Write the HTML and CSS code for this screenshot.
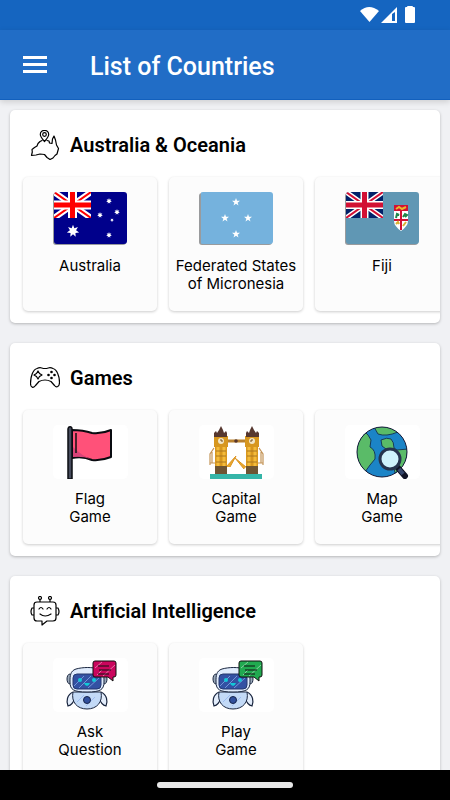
FILE: index.html
```html
<!DOCTYPE html>
<html lang="en">
<head>
<meta charset="utf-8">
<meta name="viewport" content="width=device-width, initial-scale=1">
<title>List of Countries</title>
<link rel="stylesheet" href="styles.css">
</head>
<body>
<svg class="defs" aria-hidden="true">
  <defs>
    <clipPath id="flag-shape"><rect x="1" y="0" width="73" height="52" rx="3"/></clipPath>
    <clipPath id="canton"><rect x="1" y="0" width="37" height="26"/></clipPath>
    <clipPath id="earth"><circle cx="38" cy="27" r="25"/></clipPath>
    <path id="star5" d="M0-4 1-1.200 4-1.200 1.600.7 2.500 3.600 0 1.800-2.500 3.600-1.600.7-4-1.200-1-1.200Z"/>
    <path id="star7" d="M0-7 1.500-3 5.500-4.400 3.400-.8 6.800 1.600 2.700 2.300 3 6.300 0 3.600-3 6.300-2.700 2.300-6.800 1.600-3.400-.8-5.500-4.400-1.500-3Z"/>
    <g id="robot" transform="translate(0 1)">
      <path d="M17 15c-4 0-4 10 0 10M51 15c4 0 4 10 0 10" fill="#9aa9ba" stroke="#1b2740" stroke-width="1"/>
      <path d="M20 33c-6 3-7 9-5 14 4-1 6-5 7-8M48 33c6 3 7 9 5 14-4-1-6-5-7-8" fill="#e3edfb" stroke="#1b2740" stroke-width="1.200"/>
      <path d="M20 33c-2 10 4 17 14 17s16-7 14-17Z" fill="#c4daf7" stroke="#1b2740" stroke-width="1"/>
      <path d="M23 10c7-2 17-2 22 0 6 2 6 7 6 13 0 8-4 10-17 10S17 31 17 23c0-6 0-11 6-13Z" fill="#dfebfc" stroke="#1b2740" stroke-width="1"/>
      <rect x="20" y="15" width="28" height="15" rx="4" fill="#3452a3" stroke="#26396e"/>
      <path d="m21 27 10-10M26 29l12-12M35 29l11-10M24 43l7-7M33 47l9-9" stroke="#8fb1ef" stroke-width="1" opacity=".7"/>
      <circle cx="27" cy="21" r="2" fill="#13c8d7"/><circle cx="41" cy="21" r="2" fill="#13c8d7"/>
      <path d="M31 24h6q-1 3-3 3t-3-3Z" fill="#13c8d7"/>
      <circle cx="34" cy="41" r="3.500" fill="#31509d" stroke="#17254b"/>
      <path d="M42 2h19q2 0 2 2v12q0 2-2 2h-1v4l-5-4H42q-2 0-2-2V4q0-2 2-2Z" stroke="#111" stroke-width="1"/>
      <path d="m42 9 7-6M50 17 62 6M44 16l5-5" stroke="#fff" opacity=".45"/>
      <path d="M45 7h11M46 11h12M45 15h11" stroke="#111" stroke-width="1"/>
    </g>
  </defs>
</svg>

<div class="screen">
  <div class="status-bar">
    <svg width="56" height="18" viewBox="0 0 56 18" fill="#fff" aria-hidden="true">
      <path d="M0 5q9-8 19 0l-9.500 11Z"/>
      <path fill-rule="evenodd" d="M21 17 37 1v16ZM32 8v7h3V6Z"/>
      <path d="M47 1q0-1 1-1h4q1 0 1 1h1q1 0 1 1v14q0 1-1 1h-8q-1 0-1-1V2q0-1 1-1Z"/>
    </svg>
  </div>

  <header class="app-bar">
    <button class="menu" type="button" aria-label="Open menu"><span></span><span></span><span></span></button>
    <h1>List of Countries</h1>
  </header>

  <main class="content">
    <section class="card">
      <h2>
        <svg class="outline" viewBox="0 0 30 30" aria-hidden="true">
          <path d="M14.500 11.500C11 7.500 10.300 5.500 10.300 4.500a4.200 4.200 0 0 1 8.400 0c0 1-.7 3-4.200 7Z"/><circle cx="14.500" cy="4.500" r="1.800"/>
          <path d="M12 10.500 10 11.500 8 13.500 7 16 4.500 17.500 2 19.500 2.300 22 1.500 25.500 6 25 10 24 14.500 24.500 17 27.500 20 29.500 23 28 25 25.500 27 24 28.500 18.500 26.500 15 25.500 10 24 6 22.500 9 22 13.500 19.500 13 19 11 17 10.500"/>
        </svg>
        Australia &amp; Oceania
      </h2>
      <div class="tiles">
        <a class="tile" href="#">
          <svg viewBox="0 0 75 54" aria-hidden="true">
            <rect x="0" y="1" width="73" height="52" rx="3" fill="#999b9d"/>
            <g clip-path="url(#flag-shape)">
              <path d="M1 0h73v52H1Z" fill="#00008b"/>
              <g clip-path="url(#canton)">
                <path d="M1 0 38 26M38 0 1 26" stroke="#fff" stroke-width="6"/>
                <path d="M1 0 38 26M38 0 1 26" stroke="#f00" stroke-width="2"/>
                <path d="M19.500 0v26M1 13h37" stroke="#fff" stroke-width="9"/>
                <path d="M19.500 0v26M1 13h37" stroke="#f00" stroke-width="5"/>
              </g>
              <g fill="#fff">
                <use href="#star7" transform="translate(20 39) scale(.9)"/>
                <use href="#star7" transform="translate(56 9) scale(.42)"/>
                <use href="#star7" transform="translate(47 23) scale(.42)"/>
                <use href="#star7" transform="translate(64 20) scale(.42)"/>
                <use href="#star7" transform="translate(59 28) scale(.26)"/>
                <use href="#star7" transform="translate(56 43) scale(.42)"/>
              </g>
            </g>
          </svg>
          <span>Australia</span>
        </a>
        <a class="tile" href="#">
          <svg viewBox="0 0 75 54" aria-hidden="true">
            <rect x="0" y="1" width="73" height="52" rx="3" fill="#999b9d"/>
            <g clip-path="url(#flag-shape)"><path d="M2 0h72v52H2Z" fill="#75b2dd"/></g>
            <g fill="#fff">
              <use href="#star5" x="37" y="10"/><use href="#star5" x="26" y="26"/>
              <use href="#star5" x="49" y="26"/><use href="#star5" x="37" y="42"/>
            </g>
          </svg>
          <span>Federated States of Micronesia</span>
        </a>
        <a class="tile" href="#">
          <svg viewBox="0 0 75 54" aria-hidden="true">
            <rect x="0" y="1" width="73" height="52" rx="3" fill="#999b9d"/>
            <g clip-path="url(#flag-shape)">
              <path d="M1 0h73v52H1Z" fill="#6097b4"/>
              <g clip-path="url(#canton)">
                <path d="M1 0h37v26H1Z" fill="#012169"/>
                <path d="M1 0 38 26M38 0 1 26" stroke="#fff" stroke-width="5"/>
                <path d="M1 0 38 26M38 0 1 26" stroke="#d21034" stroke-width="2"/>
                <path d="M19.500 0v26M1 13h37" stroke="#fff" stroke-width="8"/>
                <path d="M19.500 0v26M1 13h37" stroke="#d21034" stroke-width="5"/>
              </g>
              <path d="M49 13h14v16q0 5-7 10-7-5-7-10Z" fill="#fff"/>
              <path d="M49 13h14v6H49Z" fill="#d21034"/>
              <path d="m51 17 3-2 3 2 4-2" stroke="#e8b82c" stroke-width="2" fill="none"/>
              <path d="M56 19v19M49 28h14" stroke="#d21034" stroke-width="2"/>
              <path d="m51 26 1-4 2 1-2 0M58 25l2-3 2 1-2 2" fill="none" stroke="#21864b" stroke-width="2"/>
              <path d="m51 32 2-2 1 2M58 34l3-4" fill="none" stroke="#d9b132" stroke-width="2"/>
            </g>
          </svg>
          <span>Fiji</span>
        </a>
      </div>
    </section>

    <section class="card">
      <h2>
        <svg class="outline" viewBox="0 0 30 30" aria-hidden="true">
          <path d="M7 5.500c4-2 4 0 8 0s4-2 8 0c4 1 6.500 8 6.500 14 0 4-3 5.500-5 3l-3.500-4q-6-3-12 0l-3.500 4c-2 3-5 2-5-2 0-7 2.500-14 6.500-15Z"/>
          <path d="m8 8 1.500 2.500L12 12l-2.500 1.500L8 16l-1.500-2.500L4 12l2.500-1.500Z"/>
          <g fill="#000" stroke="none"><circle cx="21.500" cy="9" r="1.300"/><circle cx="18.500" cy="12" r="1.300"/><circle cx="24.500" cy="12" r="1.300"/><circle cx="21.500" cy="15" r="1.300"/></g>
        </svg>
        Games
      </h2>
      <div class="tiles">
        <a class="tile" href="#">
          <svg class="art" viewBox="0 0 75 54" aria-hidden="true">
            <path d="M19 5q11 0 20 3 10 1 19-3v27q-10 4-19 3-9-4-20-2Z" fill="#ff5179" stroke="#090b10" stroke-width="2" stroke-linejoin="round"/>
            <path d="M20 22v10q9-1 18 2-9-3-18-12Z" fill="#d94378"/>
            <path d="M23 8v20" stroke="#111" stroke-width="1.500"/>
            <path d="M16 2q3-1 3 2v50h-4V4q0-1 1-2Z" fill="#474c5d" stroke="#090b10" stroke-width="1.500"/>
          </svg>
          <span>Flag<br>Game</span>
        </a>
        <a class="tile" href="#">
          <svg class="art" viewBox="0 0 75 54" aria-hidden="true">
            <path d="M11 49h52v5H11Z" fill="#35b5a8"/>
            <path d="M29 16h20" stroke="#b9822f" stroke-width="3"/><circle cx="37" cy="16" r="1.800" fill="#59362c"/>
            <path d="m27 42 10-11-6 11M47 42l-11-9 9 11" fill="#e9a72a" stroke="#dc9524"/>
            <g id="tower">
              <path d="M15 23 11 29v11M11 38h5M13 27v11" fill="none" stroke="#c49457" stroke-width="1.200"/>
              <path d="M15 11h14v11h-1v20H16V22h-1Z" fill="#d7971f"/>
              <path d="M15 12V8l2-2 1 2 2-3 2-4 2 4 1 3 2-2 1 2v4Z" fill="#56372f"/>
              <circle cx="22" cy="16" r="3" fill="#f2e6c6"/><path d="M22 14v2h2" stroke="#765020" fill="none"/>
              <path d="M19 22v19M25 22v19" stroke="#f4bb3a" stroke-width="3"/>
              <path d="M17 26h10M17 31h10M17 37h10" stroke="#a87623"/>
              <path d="M16 41h12v8H16Z" fill="#6d5433"/>
            </g>
            <use href="#tower" transform="matrix(-1 0 0 1 75 0)"/>
          </svg>
          <span>Capital<br>Game</span>
        </a>
        <a class="tile" href="#">
          <svg class="art" viewBox="0 0 75 54" aria-hidden="true">
            <g transform="translate(-1 0)">
              <circle cx="38" cy="27" r="25" fill="#1b84c7"/>
              <g clip-path="url(#earth)" fill="#5abb68" stroke="#173c5a" stroke-width="1">
                <path d="m30 2 4 7q8 3 20-2l-8-7Z"/>
                <path d="m22 8 2 2 3 5-1 7q6 3 5 12l-5 6-5 7L8 38 10 15Z"/>
                <path d="M37 15q6-3 10-1 3 3 3 9l3 2 11-1-3 17-10 7-4-18q-6-1-5-6l-4-3Z"/>
              </g>
              <circle cx="38" cy="27" r="25" fill="none" stroke="#151937" stroke-width="1"/>
              <path d="m54 43 7 8" stroke="#111426" stroke-width="6" stroke-linecap="round"/>
              <path d="m55 44 4 5" stroke="#36476d" stroke-width="4"/>
              <circle cx="46" cy="34" r="10" fill="#cff2fc" stroke="#26344e" stroke-width="3"/>
            </g>
          </svg>
          <span>Map<br>Game</span>
        </a>
      </div>
    </section>

    <section class="card">
      <h2>
        <svg class="outline" viewBox="0 0 30 30" aria-hidden="true">
          <path d="M7 6h16q3 0 3 3v13q0 3-3 3h-6l-5 4v-4H7q-3 0-3-3V9q0-3 3-3ZM10 6V3M20 6V3M4 12H2q-2 4 0 7h2M26 12h2q2 4 0 7h-2M9 13q2-3 4 0M17 13q2-3 4 0M10 18q5 4 11 0"/>
          <circle cx="10" cy="2" r="1.500"/><circle cx="20" cy="2" r="1.500"/>
        </svg>
        Artificial Intelligence
      </h2>
      <div class="tiles">
        <a class="tile" href="#">
          <svg class="art" viewBox="0 0 75 54" aria-hidden="true"><use href="#robot" fill="#cb075d"/></svg>
          <span>Ask<br>Question</span>
        </a>
        <a class="tile" href="#">
          <svg class="art" viewBox="0 0 75 54" aria-hidden="true"><use href="#robot" fill="#22aa50"/></svg>
          <span>Play<br>Game</span>
        </a>
      </div>
    </section>
  </main>

  <div class="nav-bar"><span></span></div>
</div>
</body>
</html>
```

FILE: styles.css
```css
* {
  box-sizing: border-box;
}

body {
  margin: 0;
  background: #f0f1f4;
  color: #000;
  font-family: Roboto, "Liberation Sans", sans-serif;
}

.defs {
  position: absolute;
  width: 0;
  height: 0;
}

.screen {
  display: flex;
  flex-direction: column;
  height: 100vh;
}

.status-bar {
  flex: none;
  display: flex;
  justify-content: flex-end;
  padding: 6px 34px;
  background: #1565c0;
}

.status-bar svg {
  display: block;
}

.app-bar {
  position: relative;
  flex: none;
  display: flex;
  align-items: center;
  gap: 43px;
  padding: 20px 23px;
  background: #216dc6;
  border-bottom: 1px solid #1260bd;
  box-shadow: 0 2px 6px rgba(0, 0, 0, 0.15);
  color: #fff;
}

.menu {
  display: flex;
  flex-direction: column;
  gap: 4px;
  padding: 0;
  border: 0;
  background: none;
}

.menu span {
  width: 24px;
  height: 3px;
  background: #fff;
}

h1 {
  margin: 0;
  padding-top: 5px;
  font-size: 25px;
  font-weight: 500;
  line-height: 24px;
}

.content {
  flex: 1;
  min-height: 0;
  overflow-y: auto;
  scrollbar-width: none;
  display: flex;
  flex-direction: column;
  gap: 20px;
  padding: 10px;
}

.card {
  flex: none;
  padding: 20px 0 0;
  border-radius: 5px;
  background: #fff;
  box-shadow: 0 1px 3px rgba(0, 0, 0, 0.25);
}

h2 {
  display: flex;
  align-items: center;
  gap: 10px;
  margin: 0;
  padding: 0 20px;
  font-size: 20px;
  font-weight: 600;
  line-height: 30px;
}

.outline {
  width: 30px;
  height: 30px;
  fill: none;
  stroke: #000;
  stroke-width: 1.2px;
  stroke-linejoin: round;
  stroke-linecap: round;
}

.tiles {
  display: flex;
  gap: 12px;
  overflow-x: auto;
  scrollbar-width: none;
  padding: 17px 13px 12px;
}

.tile {
  flex: none;
  display: flex;
  flex-direction: column;
  align-items: center;
  gap: 11px;
  width: 134px;
  height: 134px;
  padding-top: 15px;
  border-radius: 5px;
  background: #fcfcfc;
  box-shadow: 0 1px 3px rgba(0, 0, 0, 0.2);
  color: #000;
  font-family: Inter, Roboto, sans-serif;
  font-size: 15px;
  line-height: 18px;
  text-align: center;
  text-decoration: none;
}

.tile svg {
  width: 75px;
  height: 54px;
}

.art {
  border-radius: 5px;
  background: #fff;
}

.nav-bar {
  flex: none;
  display: flex;
  justify-content: center;
  padding: 12px;
  background: #000;
}

.nav-bar span {
  width: 136px;
  height: 6px;
  border-radius: 3px;
  background: #e8e8e8;
}
```
